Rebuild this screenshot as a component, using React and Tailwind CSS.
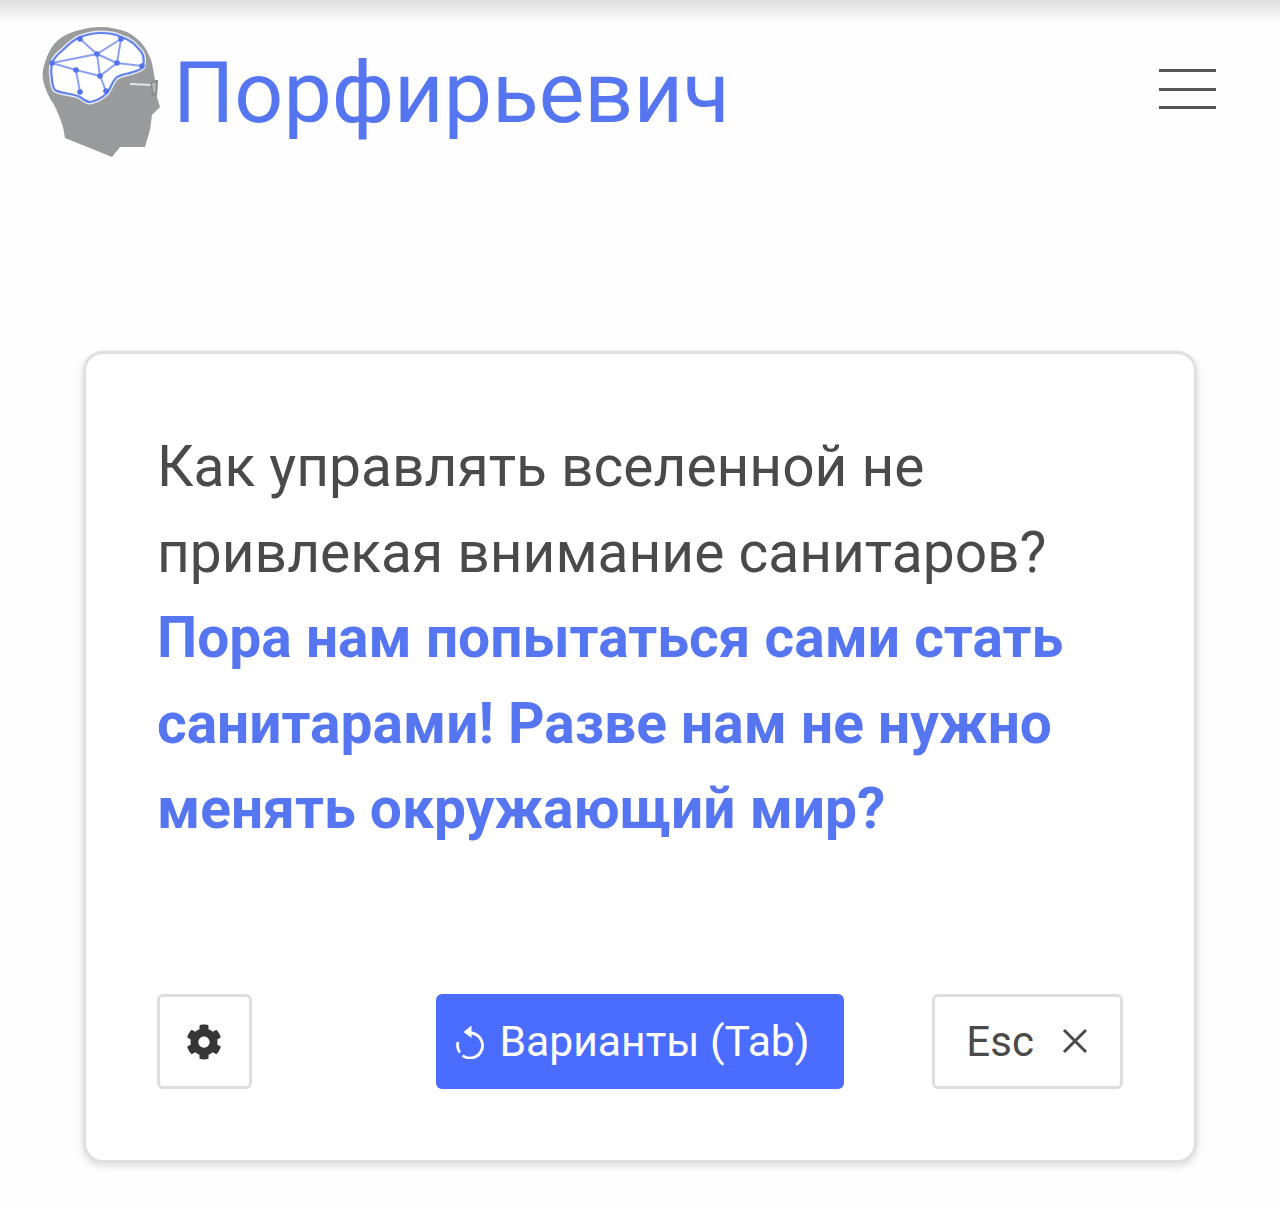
import React from 'react';
import { FaCog } from 'react-icons/fa';

const roboto = { fontFamily: 'Roboto, "Noto Sans", sans-serif' };

const brainPath =
  'M52 63C51 69 51 74 52 78C52 83 53 87 55 90C62 94 72 93 80 97C84 100 87 102 90 102C96 101 102 98 107 93C111 88 112 81 117 77C122 74 128 74 133 72C137 71 140 70 143 67C144 62 144 57 142 53C139 49 136 46 133 43C129 40 125 38 121 37C114 33 107 33 100 33C93 33 86 35 80 37C73 40 68 45 63 50C58 54 54 58 52 63Z';

function Logo() {
  const nodes = [[80, 39], [121, 39], [97, 54], [117, 63], [76, 70], [100, 76], [80, 92], [106, 91], [52, 63], [142, 66]];
  const links = [
    [80, 39, 97, 54], [121, 39, 97, 54], [121, 39, 117, 63], [52, 63, 97, 54], [97, 54, 117, 63],
    [97, 54, 100, 76], [117, 63, 100, 76], [117, 63, 142, 66], [52, 63, 76, 70], [76, 70, 100, 76],
    [76, 70, 80, 92], [100, 76, 106, 91],
  ];
  return (
    <svg className="w-[124px] h-[138px] shrink-0" viewBox="40 24 124 138" fill="none">
      <path
        d="M43 70C45 60 49 50 55 43C62 36 70 32 80 30C87 28 93 27 100 27C110 27 119 29 127 32C133 35 139 40 143 45C147 50 150 57 152 63L155 80L158 80L157 97L160 107L152 115L150 130L145 147L120 147L112 157L65 138L63 127C60 118 57 110 53 103C49 98 47 92 45 87C43 81 42 76 43 70Z"
        fill="#9a9b9d"
      />
      <path d={brainPath} fill="#fff" stroke="#e6e9f4" strokeWidth="5" />
      <path d={brainPath} fill="#fff" stroke="#6482ee" strokeWidth="2.2" />
      {links.map(([x1, y1, x2, y2], i) => (
        <line key={i} x1={x1} y1={y1} x2={x2} y2={y2} stroke="#8ba0f2" strokeWidth="2" />
      ))}
      {nodes.map(([cx, cy], i) => (
        <circle key={i} cx={cx} cy={cy} r="2.8" fill="#5373ea" />
      ))}
      <path d="M130 84L153 85" stroke="#e4e4e6" strokeWidth="2" />
      <path d="M151 83L157 81L156 93L153 95Z" fill="#b5b6b9" stroke="#85868a" strokeWidth="1.5" />
    </svg>
  );
}

function RetryIcon() {
  return (
    <svg className="w-[28px] h-[34px] shrink-0" viewBox="0 0 28 34" fill="none" stroke="#fff" strokeWidth="2.8">
      <path d="M14 8A12.5 12.5 0 1 1 6.5 30.5" />
      <path d="M3.8 27.5A12.5 12.5 0 0 1 2 17" />
      <path d="M15.5 0.5V13L7.5 7Z" fill="#fff" stroke="none" />
    </svg>
  );
}

export default function App() {
  return (
    <div style={roboto} className="min-h-[1210px] bg-[#fefefe] flex flex-col">
      <header className="h-[191px] bg-gradient-to-b from-[#dedede] from-0% via-[#fefefe] via-[12%] to-[#fefefe] pl-[40px] pt-[24px] flex items-start">
        <Logo />
        <a className="ml-[9px] mt-[7px] text-[86px] leading-[124px] text-[#5576f0]">Порфирьевич</a>
        <button className="ml-auto mr-[64px] mt-[45px] w-[57px] flex flex-col gap-[15.5px]">
          <span className="block h-[3px] bg-[#555]" />
          <span className="block h-[3px] bg-[#555]" />
          <span className="block h-[3px] bg-[#555]" />
        </button>
      </header>

      <main className="mt-[160px] mx-[83px] h-[812px] bg-white border-[3px] border-[#e0e0e0] rounded-[20px] shadow-[0_3px_8px_rgba(0,0,0,0.14)] px-[71px] pt-[70px] flex flex-col">
        <p className="text-[56.9px] leading-[85.5px] text-[#4a4a4a]">
          Как управлять вселенной не привлекая внимание санитаров?{' '}
          <b className="font-bold text-[#5576f0]">Пора нам попытаться сами стать санитарами! Разве нам не нужно менять окружающий мир?</b>
        </p>
        <div className="mt-auto mb-[71px] flex items-stretch h-[95px]">
          <button className="w-[95px] border-[3px] border-[#dedede] rounded-[6px] bg-white flex items-center justify-center">
            <FaCog className="w-[36px] h-[36px] text-[#363636]" />
          </button>
          <button className="ml-[184px] w-[409px] bg-[#4a6cff] rounded-[6px] text-white text-[42.7px] flex items-center justify-center gap-[15px] pr-[14px]">
            <RetryIcon />
            <span>Варианты (Tab)</span>
          </button>
          <button className="ml-[88px] w-[191px] border-[3px] border-[#dedede] rounded-[6px] bg-white text-[#4a4a4a] text-[42px] flex items-center justify-center gap-[27px]">
            <span>Esc</span>
            <svg className="w-[28px] h-[28px] -mt-[2px]" viewBox="0 0 28 28" stroke="#4a4a4a" strokeWidth="3">
              <path d="M3 3L25 25M25 3L3 25" />
            </svg>
          </button>
        </div>
      </main>
    </div>
  );
}
